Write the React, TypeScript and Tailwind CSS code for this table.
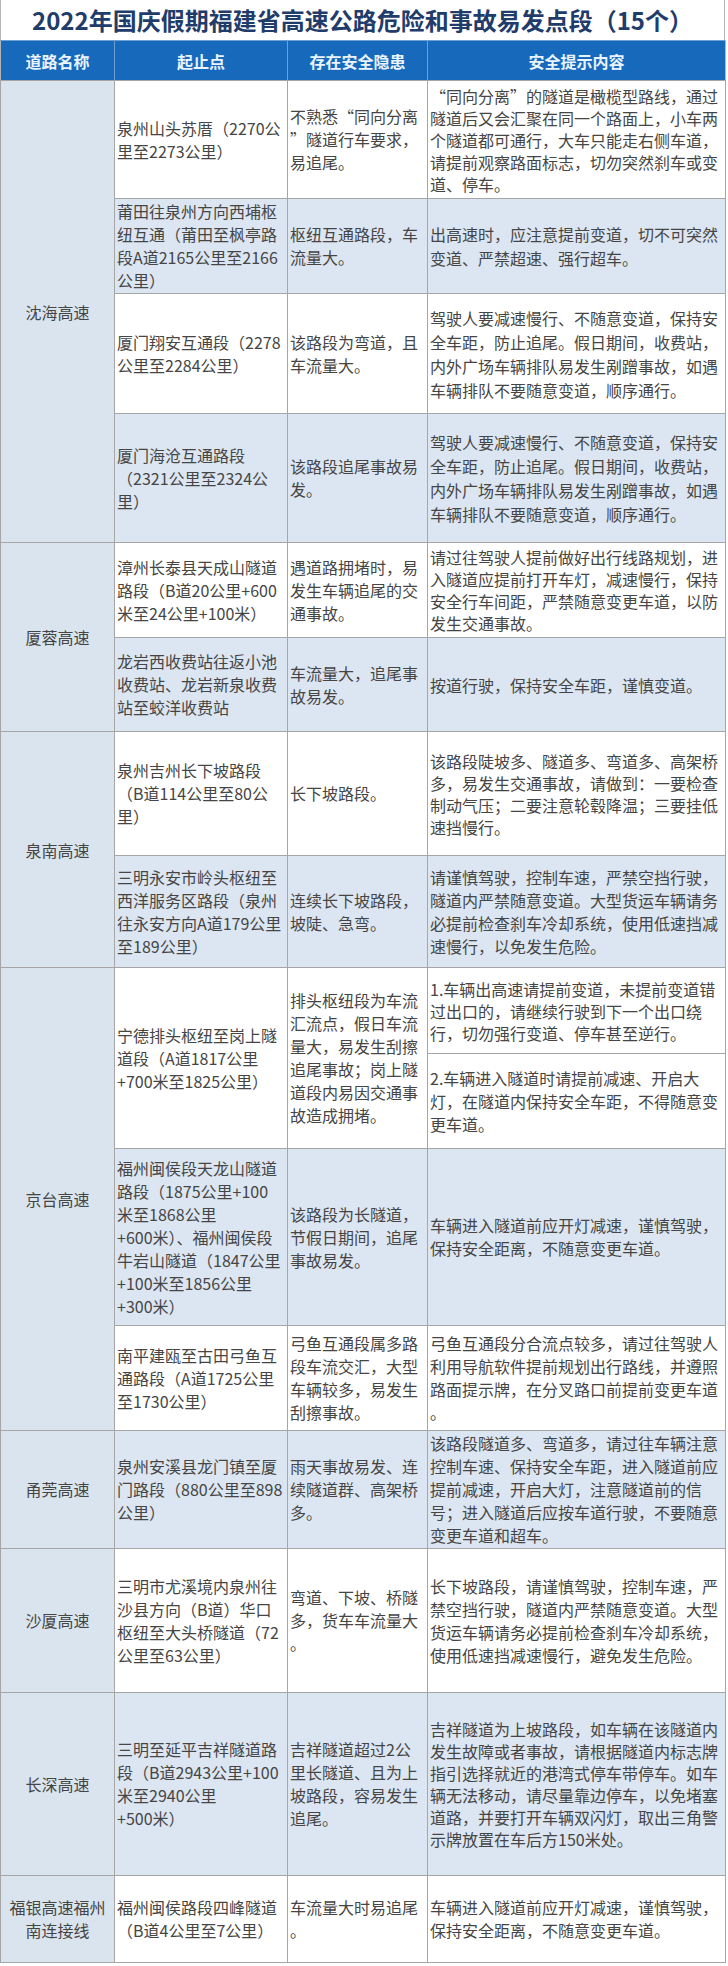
const groups = [
  { name: ["沈海高速"], span: 4 },
  { name: ["厦蓉高速"], span: 2 },
  { name: ["泉南高速"], span: 2 },
  { name: ["京台高速"], span: 4 },
  { name: ["甬莞高速"], span: 1 },
  { name: ["沙厦高速"], span: 1 },
  { name: ["长深高速"], span: 1 },
  { name: ["福银高速福州", "南连接线"], span: 1 },
];

type Row = {
  h: string;
  lh: string;
  blue: boolean;
  group?: number;
  from?: string[];
  risk?: string[];
  span?: number;
  tip: string[];
};

const sameTip = [
  "驾驶人要减速慢行、不随意变道，保持安",
  "全车距，防止追尾。假日期间，收费站，",
  "内外广场车辆排队易发生剐蹭事故，如遇",
  "车辆排队不要随意变道，顺序通行。",
];

const rows: Row[] = [
  {
    h: "h-[118px]",
    lh: "leading-[22px]",
    blue: false,
    group: 0,
    from: ["泉州山头苏厝（2270公", "里至2273公里）"],
    risk: ["不熟悉“同向分离", "”隧道行车要求，", "易追尾。"],
    tip: [
      "“同向分离”的隧道是橄榄型路线，通过",
      "隧道后又会汇聚在同一个路面上，小车两",
      "个隧道都可通行，大车只能走右侧车道，",
      "请提前观察路面标志，切勿突然刹车或变",
      "道、停车。",
    ],
  },
  {
    h: "h-[95px]",
    lh: "leading-[24px]",
    blue: true,
    from: ["莆田往泉州方向西埔枢", "纽互通（莆田至枫亭路", "段A道2165公里至2166", "公里）"],
    risk: ["枢纽互通路段，车", "流量大。"],
    tip: ["出高速时，应注意提前变道，切不可突然", "变道、严禁超速、强行超车。"],
  },
  {
    h: "h-[120px]",
    lh: "leading-[24px]",
    blue: false,
    from: ["厦门翔安互通段（2278", "公里至2284公里）"],
    risk: ["该路段为弯道，且", "车流量大。"],
    tip: sameTip,
  },
  {
    h: "h-[129px]",
    lh: "leading-[24px]",
    blue: true,
    from: ["厦门海沧互通路段", "（2321公里至2324公", "里）"],
    risk: ["该路段追尾事故易", "发。"],
    tip: sameTip,
  },
  {
    h: "h-[95px]",
    lh: "leading-[22px]",
    blue: false,
    group: 1,
    from: ["漳州长泰县天成山隧道", "路段（B道20公里+600", "米至24公里+100米）"],
    risk: ["遇道路拥堵时，易", "发生车辆追尾的交", "通事故。"],
    tip: [
      "请过往驾驶人提前做好出行线路规划，进",
      "入隧道应提前打开车灯，减速慢行，保持",
      "安全行车间距，严禁随意变更车道，以防",
      "发生交通事故。",
    ],
  },
  {
    h: "h-[94px]",
    lh: "leading-[24px]",
    blue: true,
    from: ["龙岩西收费站往返小池", "收费站、龙岩新泉收费", "站至蛟洋收费站"],
    risk: ["车流量大，追尾事", "故易发。"],
    tip: ["按道行驶，保持安全车距，谨慎变道。"],
  },
  {
    h: "h-[124px]",
    lh: "leading-[22px]",
    blue: false,
    group: 2,
    from: ["泉州吉州长下坡路段", "（B道114公里至80公", "里）"],
    risk: ["长下坡路段。"],
    tip: [
      "该路段陡坡多、隧道多、弯道多、高架桥",
      "多，易发生交通事故，请做到：一要检查",
      "制动气压；二要注意轮毂降温；三要挂低",
      "速挡慢行。",
    ],
  },
  {
    h: "h-[112px]",
    lh: "leading-[23px]",
    blue: true,
    from: ["三明永安市岭头枢纽至", "西洋服务区路段（泉州", "往永安方向A道179公里", "至189公里）"],
    risk: ["连续长下坡路段，", "坡陡、急弯。"],
    tip: [
      "请谨慎驾驶，控制车速，严禁空挡行驶，",
      "隧道内严禁随意变道。大型货运车辆请务",
      "必提前检查刹车冷却系统，使用低速挡减",
      "速慢行，以免发生危险。",
    ],
  },
  {
    h: "h-[86px]",
    lh: "leading-[22px]",
    blue: false,
    group: 3,
    span: 2,
    from: ["宁德排头枢纽至岗上隧", "道段（A道1817公里", "+700米至1825公里）"],
    risk: ["排头枢纽段为车流", "汇流点，假日车流", "量大，易发生刮擦", "追尾事故；岗上隧", "道段内易因交通事", "故造成拥堵。"],
    tip: [
      "1.车辆出高速请提前变道，未提前变道错",
      "过出口的，请继续行驶到下一个出口绕",
      "行，切勿强行变道、停车甚至逆行。",
    ],
  },
  {
    h: "h-[95px]",
    lh: "leading-[23px]",
    blue: false,
    tip: [
      "2.车辆进入隧道时请提前减速、开启大",
      "灯，在隧道内保持安全车距，不得随意变",
      "更车道。",
    ],
  },
  {
    h: "h-[177px]",
    lh: "leading-[23px]",
    blue: true,
    from: [
      "福州闽侯段天龙山隧道",
      "路段（1875公里+100",
      "米至1868公里",
      "+600米）、福州闽侯段",
      "牛岩山隧道（1847公里",
      "+100米至1856公里",
      "+300米）",
    ],
    risk: ["该路段为长隧道，", "节假日期间，追尾", "事故易发。"],
    tip: ["车辆进入隧道前应开灯减速，谨慎驾驶，", "保持安全距离，不随意变更车道。"],
  },
  {
    h: "h-[105px]",
    lh: "leading-[23px]",
    blue: false,
    from: ["南平建瓯至古田弓鱼互", "通路段（A道1725公里", "至1730公里）"],
    risk: ["弓鱼互通段属多路", "段车流交汇，大型", "车辆较多，易发生", "刮擦事故。"],
    tip: [
      "弓鱼互通段分合流点较多，请过往驾驶人",
      "利用导航软件提前规划出行路线，并遵照",
      "路面提示牌，在分叉路口前提前变更车道",
      "。",
    ],
  },
  {
    h: "h-[118px]",
    lh: "leading-[23px]",
    blue: true,
    group: 4,
    from: ["泉州安溪县龙门镇至厦", "门路段（880公里至898", "公里）"],
    risk: ["雨天事故易发、连", "续隧道群、高架桥", "多。"],
    tip: [
      "该路段隧道多、弯道多，请过往车辆注意",
      "控制车速、保持安全车距，进入隧道前应",
      "提前减速，开启大灯，注意隧道前的信",
      "号；进入隧道后应按车道行驶，不要随意",
      "变更车道和超车。",
    ],
  },
  {
    h: "h-[144px]",
    lh: "leading-[23px]",
    blue: false,
    group: 5,
    from: ["三明市尤溪境内泉州往", "沙县方向（B道）华口", "枢纽至大头桥隧道（72", "公里至63公里）"],
    risk: ["弯道、下坡、桥隧", "多，货车车流量大", "。"],
    tip: [
      "长下坡路段，请谨慎驾驶，控制车速，严",
      "禁空挡行驶，隧道内严禁随意变道。大型",
      "货运车辆请务必提前检查刹车冷却系统，",
      "使用低速挡减速慢行，避免发生危险。",
    ],
  },
  {
    h: "h-[183px]",
    lh: "leading-[22px]",
    blue: true,
    group: 6,
    from: ["三明至延平吉祥隧道路", "段（B道2943公里+100", "米至2940公里", "+500米）"],
    risk: ["吉祥隧道超过2公", "里长隧道、且为上", "坡路段，容易发生", "追尾。"],
    tip: [
      "吉祥隧道为上坡路段，如车辆在该隧道内",
      "发生故障或者事故，请根据隧道内标志牌",
      "指引选择就近的港湾式停车带停车。如车",
      "辆无法移动，请尽量靠边停车，以免堵塞",
      "道路，并要打开车辆双闪灯，取出三角警",
      "示牌放置在车后方150米处。",
    ],
  },
  {
    h: "h-[87px]",
    lh: "leading-[23px]",
    blue: false,
    group: 7,
    from: ["福州闽侯路段四峰隧道", "（B道4公里至7公里）"],
    risk: ["车流量大时易追尾", "。"],
    tip: ["车辆进入隧道前应开灯减速，谨慎驾驶，", "保持安全距离，不随意变更车道。"],
  },
];

const Lines = ({ lines }: { lines: string[] }) => (
  <>
    {lines.map((l, i) => (
      <div key={i} className="whitespace-nowrap">
        {l}
      </div>
    ))}
  </>
);

const cell = "border border-[#a6a6a6] align-middle px-[2px]";

export default function App() {
  return (
    <div className="min-h-[1966px] bg-white font-['Noto_Sans_CJK_SC','Noto_Sans',sans-serif]">
      <div className="w-[725px]">
        <div className="h-[40px] border-x border-[#b5b5b5] flex items-center justify-center">
          <h1 className="text-[24px] font-bold leading-none text-[#1f3c6b] tracking-[0px]">
            2022年国庆假期福建省高速公路危险和事故易发点段（15个）
          </h1>
        </div>
        <table className="w-[725px] table-fixed border-collapse text-[16px] text-[#454545]">
          <colgroup>
            <col className="w-[114px]" />
            <col className="w-[173px]" />
            <col className="w-[140px]" />
            <col className="w-[298px]" />
          </colgroup>
          <thead>
            <tr className="h-[40px] bg-[#176abb] text-[#eaf4ff] font-bold">
              <th className="border border-[#6f9fd0] border-b-[#a6a6a6] border-l-[#b5b5b5] align-middle font-bold">道路名称</th>
              <th className="border border-[#6f9fd0] border-b-[#a6a6a6] align-middle font-bold">起止点</th>
              <th className="border border-[#6f9fd0] border-b-[#a6a6a6] align-middle font-bold">存在安全隐患</th>
              <th className="border border-[#6f9fd0] border-b-[#a6a6a6] border-r-[#b5b5b5] align-middle font-bold">安全提示内容</th>
            </tr>
          </thead>
          <tbody>
            {rows.map((r, i) => {
              const bg = r.blue ? "bg-[#dce6f2]" : "bg-white";
              const g = r.group !== undefined ? groups[r.group] : null;
              return (
                <tr key={i} className={`${r.h} ${r.lh}`}>
                  {g && (
                    <td rowSpan={g.span} className={`${cell} bg-[#dae4ef] text-center`}>
                      <Lines lines={g.name} />
                    </td>
                  )}
                  {r.from && (
                    <td rowSpan={r.span ?? 1} className={`${cell} ${bg} leading-[23px]`}>
                      <Lines lines={r.from} />
                    </td>
                  )}
                  {r.risk && (
                    <td rowSpan={r.span ?? 1} className={`${cell} ${bg} leading-[23px]`}>
                      <Lines lines={r.risk} />
                    </td>
                  )}
                  <td className={`${cell} ${bg}`}>
                    <Lines lines={r.tip} />
                  </td>
                </tr>
              );
            })}
          </tbody>
        </table>
      </div>
    </div>
  );
}
